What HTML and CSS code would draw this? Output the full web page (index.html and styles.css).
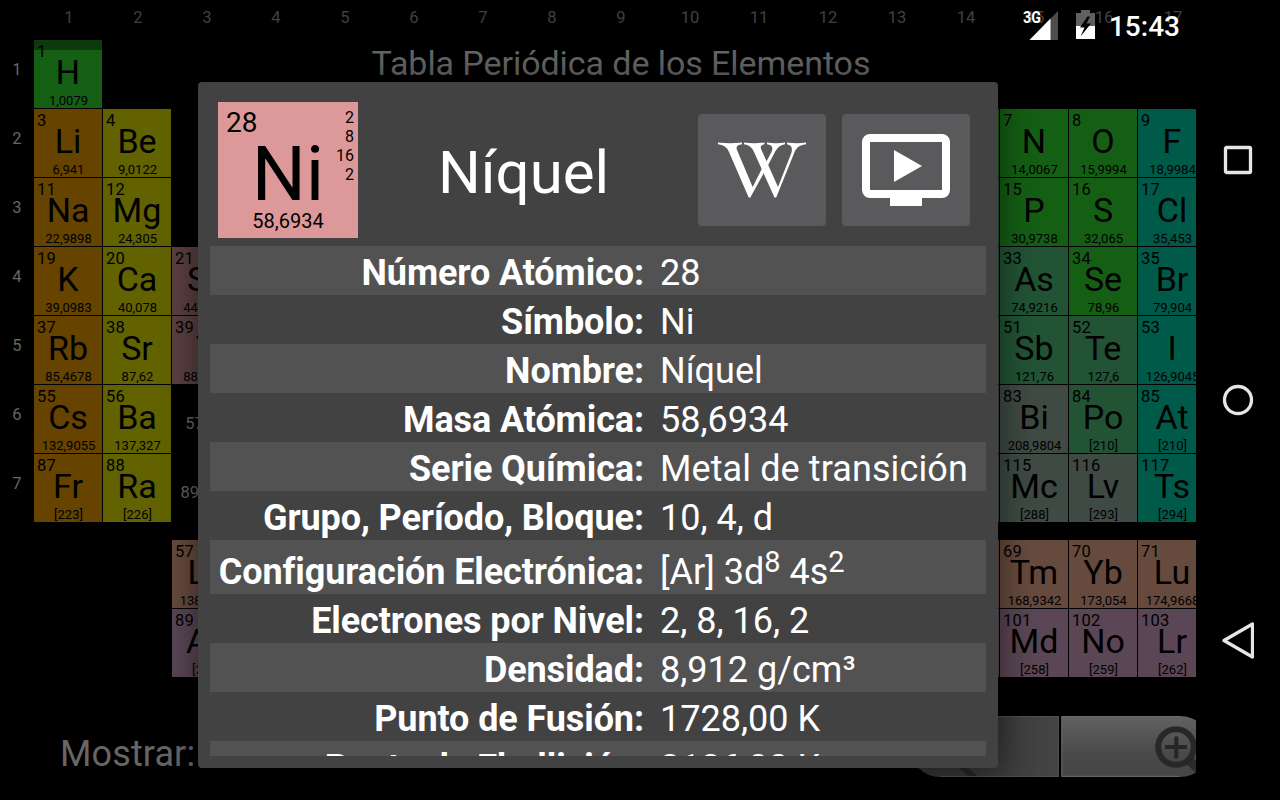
FILE: index.html
```html
<!DOCTYPE html>
<html lang="es">
<head>
<meta charset="utf-8">
<title>Tabla Periódica de los Elementos</title>
<link rel="stylesheet" href="styles.css">
</head>
<body>
<div class="screen">
  <main class="app">
    <div class="col-labels"><span>1</span><span>2</span><span>3</span><span>4</span><span>5</span><span>6</span><span>7</span><span>8</span><span>9</span><span>10</span><span>11</span><span>12</span><span>13</span><span>14</span><span>15</span><span>16</span><span>17</span></div>
    <div class="board">
      <div class="row-labels"><span>1</span><span>2</span><span>3</span><span>4</span><span>5</span><span>6</span><span>7</span></div>
      <div class="table">
        <h1 class="title">Tabla Periódica de los Elementos</h1>
        <div class="el nonmetal first c1 r1"><i>1</i><b>H</b><small>1,0079</small></div>
        <div class="el alkali c1 r2"><i>3</i><b>Li</b><small>6,941</small></div>
        <div class="el alkali c1 r3"><i>11</i><b>Na</b><small>22,9898</small></div>
        <div class="el alkali c1 r4"><i>19</i><b>K</b><small>39,0983</small></div>
        <div class="el alkali c1 r5"><i>37</i><b>Rb</b><small>85,4678</small></div>
        <div class="el alkali c1 r6"><i>55</i><b>Cs</b><small>132,9055</small></div>
        <div class="el alkali c1 r7"><i>87</i><b>Fr</b><small>[223]</small></div>
        <div class="el earth c2 r2"><i>4</i><b>Be</b><small>9,0122</small></div>
        <div class="el earth c2 r3"><i>12</i><b>Mg</b><small>24,305</small></div>
        <div class="el earth c2 r4"><i>20</i><b>Ca</b><small>40,078</small></div>
        <div class="el earth c2 r5"><i>38</i><b>Sr</b><small>87,62</small></div>
        <div class="el earth c2 r6"><i>56</i><b>Ba</b><small>137,327</small></div>
        <div class="el earth c2 r7"><i>88</i><b>Ra</b><small>[226]</small></div>
        <div class="el transition c3 r4"><i>21</i><b>Sc</b><small>44,9559</small></div>
        <div class="el transition c3 r5"><i>39</i><b>Y</b><small>88,9059</small></div>
        <div class="range c3 r6">57-71</div>
        <div class="range c3 r7">89-103</div>
        <div class="el lanth c3 r9"><i>57</i><b>La</b><small>138,9055</small></div>
        <div class="el actin c3 r10"><i>89</i><b>Ac</b><small>[227]</small></div>
        <div class="el nonmetal c14 r2"></div>
        <div class="el metalloid c14 r3"></div>
        <div class="el metalloid c14 r4"></div>
        <div class="el post c14 r5"></div>
        <div class="el post c14 r6"></div>
        <div class="el post c14 r7"></div>
        <div class="el lanth c14 r9"></div>
        <div class="el actin c14 r10"></div>
        <div class="el nonmetal c15 r2"><i>7</i><b>N</b><small>14,0067</small></div>
        <div class="el nonmetal c15 r3"><i>15</i><b>P</b><small>30,9738</small></div>
        <div class="el metalloid c15 r4"><i>33</i><b>As</b><small>74,9216</small></div>
        <div class="el metalloid c15 r5"><i>51</i><b>Sb</b><small>121,76</small></div>
        <div class="el post c15 r6"><i>83</i><b>Bi</b><small>208,9804</small></div>
        <div class="el post c15 r7"><i>115</i><b>Mc</b><small>[288]</small></div>
        <div class="el lanth c15 r9"><i>69</i><b>Tm</b><small>168,9342</small></div>
        <div class="el actin c15 r10"><i>101</i><b>Md</b><small>[258]</small></div>
        <div class="el nonmetal c16 r2"><i>8</i><b>O</b><small>15,9994</small></div>
        <div class="el nonmetal c16 r3"><i>16</i><b>S</b><small>32,065</small></div>
        <div class="el nonmetal c16 r4"><i>34</i><b>Se</b><small>78,96</small></div>
        <div class="el metalloid c16 r5"><i>52</i><b>Te</b><small>127,6</small></div>
        <div class="el metalloid c16 r6"><i>84</i><b>Po</b><small>[210]</small></div>
        <div class="el post c16 r7"><i>116</i><b>Lv</b><small>[293]</small></div>
        <div class="el lanth c16 r9"><i>70</i><b>Yb</b><small>173,054</small></div>
        <div class="el actin c16 r10"><i>102</i><b>No</b><small>[259]</small></div>
        <div class="el halogen c17 r2"><i>9</i><b>F</b><small>18,9984</small></div>
        <div class="el halogen c17 r3"><i>17</i><b>Cl</b><small>35,453</small></div>
        <div class="el halogen c17 r4"><i>35</i><b>Br</b><small>79,904</small></div>
        <div class="el halogen c17 r5"><i>53</i><b>I</b><small>126,9045</small></div>
        <div class="el halogen c17 r6"><i>85</i><b>At</b><small>[210]</small></div>
        <div class="el halogen c17 r7"><i>117</i><b>Ts</b><small>[294]</small></div>
        <div class="el lanth c17 r9"><i>71</i><b>Lu</b><small>174,9668</small></div>
        <div class="el actin c17 r10"><i>103</i><b>Lr</b><small>[262]</small></div>
      </div>
    </div>
    <div class="toolbar">
      <span class="show">Mostrar:</span>
      <svg class="zoomer" width="290" height="64" viewBox="910 714 290 64">
        <defs>
          <linearGradient id="up" x1="0" y1="0" x2="0" y2="1"><stop offset="0" stop-color="#626262"/><stop offset=".6" stop-color="#4a4a4a"/><stop offset="1" stop-color="#454545"/></linearGradient>
          <linearGradient id="down" x1="0" y1="0" x2="1" y2="0"><stop offset="0" stop-color="#343434"/><stop offset=".55" stop-color="#3a3a3a"/><stop offset=".85" stop-color="#424242"/><stop offset="1" stop-color="#444"/></linearGradient>
        </defs>
        <path d="M1059 716H940a30.500 30.500 0 0 0 0 61H1059z" fill="url(#down)"/>
        <path d="M940 776.500H1058.500V716.500H998" fill="none" stroke="#505050"/>
        <path d="M956 765l12 11h9l-12-11z" fill="#262626"/>
        <path d="M1061.500 716H1180a30.500 30.500 0 0 1 0 61H1061.500z" fill="url(#up)"/>
        <path d="M1180 776.300H1061.800V716.500H1180" fill="none" stroke="#6c6c6c"/>
        <path d="M1188 759l12 12" stroke="#2b2b2b" stroke-width="9"/>
        <circle cx="1176" cy="747" r="17.800" fill="none" stroke="#282828" stroke-width="6"/>
        <path d="M1165 747h22M1176.300 736.500v22" stroke="#262626" stroke-width="4"/>
      </svg>
    </div>
  </main>
  <nav class="nav">
    <svg width="32" height="32" viewBox="0 0 32 32"><rect x="3.500" y="3.500" width="25" height="25" rx="1"/></svg>
    <svg width="32" height="32" viewBox="0 0 32 32"><circle cx="16" cy="16" r="13.500"/></svg>
    <svg width="32" height="40" viewBox="0 0 32 40"><path d="M2 20.500L30.500 4V37z"/></svg>
  </nav>

  <div class="status">
    <svg width="36" height="32" viewBox="1024 9 36 32">
      <path d="M1059 11v29h-28.500z" fill="#4d4d4d"/><path d="M1051.500 18.600V40h-21z" fill="#fff"/>
      <text x="1024" y="23.300" class="net" textLength="18" lengthAdjust="spacingAndGlyphs">3G</text>
    </svg>
    <svg class="batt" width="20" height="32" viewBox="1075 9 20 32">
      <path d="M1076 13h5v-3h9v3h5v13.500h-19z" fill="#606060"/><path d="M1076 26h19v13h-19z" fill="#fff"/>
      <path d="M1087.500 16.500l-7.500 11h4.500l-4 9 10.500-13h-4.500l3.500-7z" fill="#000"/>
    </svg>
    <span class="clock">15:43</span>
  </div>

  <section class="dialog">
    <header class="head">
      <div class="card">
        <span class="num">28</span><span class="shells">2<br>8<br>16<br>2</span>
        <span class="sym">Ni</span><span class="mass">58,6934</span>
      </div>
      <h2 class="name">Níquel</h2>
      <div class="btn" role="button" aria-label="Wikipedia">
        <svg width="96" height="96" viewBox="714 122 96 96">
          <g fill="#fff">
            <path d="M718 142.500Q730 144 742 142.500V144.300Q735 145 737 150L752.700 187 763 166.500 765.500 170 750.300 197.500H748.700L729 152Q726 144.800 718 144.300z"/>
            <path d="M744 142.500Q754 144 764.500 142.500V144.300Q759 145 761.500 150L778 187 791 154Q794 145.500 787 144.300V142.500Q797 144 806 142.500V144.300Q798 145 795 151L776.200 197.500H774.500L754 152Q751 145 744 144.300z"/>
            <path d="M764 166L771.500 152Q774.500 145 767 144.300V142.500Q776 144 785 142.500V144.300Q779 145 775.500 151L765.500 170z"/>
          </g>
        </svg>
      </div>
      <div class="btn" role="button" aria-label="Vídeo">
        <svg width="96" height="96" viewBox="0 0 96 96"><rect x="12" y="20" width="80" height="56" rx="4" fill="none" stroke="#fff" stroke-width="8" transform="translate(-4 -4)"/><path d="M32 76h32v8H32zM36 28v32l28-16z" fill="#fff"/></svg>
      </div>
    </header>
    <dl class="props">
      <div><dt>Número Atómico:</dt><dd>28</dd></div>
      <div><dt>Símbolo:</dt><dd>Ni</dd></div>
      <div><dt>Nombre:</dt><dd>Níquel</dd></div>
      <div><dt>Masa Atómica:</dt><dd>58,6934</dd></div>
      <div><dt>Serie Química:</dt><dd class="wide">Metal de transición</dd></div>
      <div><dt>Grupo, Período, Bloque:</dt><dd>10, 4, d</dd></div>
      <div class="tall"><dt>Configuración Electrónica:</dt><dd>[Ar] 3d<sup>8</sup> 4s<sup>2</sup></dd></div>
      <div><dt>Electrones por Nivel:</dt><dd>2, 8, 16, 2</dd></div>
      <div><dt>Densidad:</dt><dd>8,912 g/cm³</dd></div>
      <div><dt>Punto de Fusión:</dt><dd>1728,00 K</dd></div>
      <div><dt>Punto de Ebullición:</dt><dd>3186,00 K</dd></div>
    </dl>
  </section>
</div>
</body>
</html>
```
FILE: styles.css
```css
* { box-sizing: border-box; }
body { margin: 0; background: #000; font-family: Roboto, "Liberation Sans", sans-serif; }
.screen { position: relative; width: 1280px; height: 800px; overflow: hidden; background: #000; display: flex; }

.app { width: 1196px; height: 800px; overflow: hidden; }
.col-labels { display: flex; gap: 1px; height: 40px; padding-left: 35px; }
.col-labels span { flex: 0 0 68px; text-align: center; font-size: 16.500px; line-height: 35px; color: #404040; }
.board { display: flex; height: 640px; }
.row-labels { width: 34px; flex: none; display: flex; flex-direction: column; gap: 1px; }
.row-labels span { height: 68px; line-height: 60px; text-align: center; font-size: 16.500px; color: #666; }
.table { flex: none; display: grid; grid-template-columns: repeat(17, 68px); grid-template-rows: repeat(7, 68px) 16px repeat(2, 68px); gap: 1px; }
.title { grid-column: 3 / 16; grid-row: 1; margin: 0; text-align: center; font-weight: 400; font-size: 34px; line-height: 47px; letter-spacing: -.07px; padding-left: 2px; color: #666; }

.el { width: 68px; height: 68px; color: #000; display: flex; flex-direction: column; align-items: center; }
.el i { align-self: flex-start; margin-left: 3px; font-style: normal; font-size: 16.500px; letter-spacing: .2px; line-height: 24px; height: 19px; }
.el b { font-weight: 400; font-size: 34px; line-height: 32px; height: 32px; margin-top: -3px; white-space: nowrap; }
.el small { font-size: 13px; line-height: 15px; margin: 5px 0 0 1px; white-space: nowrap; }
.nonmetal { background: #145f14; }
.first { background: linear-gradient(#0c3a0c 10px, #145f14 10px); }
.alkali { background: #664400; }
.earth { background: #626200; }
.transition { background: #5c4040; }
.metalloid { background: #225335; }
.post { background: #3e4a43; }
.halogen { background: #005a4a; }
.lanth { background: #664a3e; }
.actin { background: #5a4655; }
.range { color: #666; font-size: 16.500px; line-height: 77px; text-align: center; }
.c1 { grid-column: 1; } .c2 { grid-column: 2; } .c3 { grid-column: 3; } .c14 { grid-column: 14; }
.c15 { grid-column: 15; } .c16 { grid-column: 16; } .c17 { grid-column: 17; }
.r1 { grid-row: 1; } .r2 { grid-row: 2; } .r3 { grid-row: 3; } .r4 { grid-row: 4; } .r5 { grid-row: 5; }
.r6 { grid-row: 6; } .r7 { grid-row: 7; } .r9 { grid-row: 9; } .r10 { grid-row: 10; }

.toolbar { display: flex; padding: 34px 0 0 60px; height: 120px; justify-content: space-between; width: 1200px; }
.show { font-size: 36px; line-height: 80px; letter-spacing: .12px; color: #666; }
.zoomer { display: block; flex: none; }

.nav { width: 84px; display: flex; flex-direction: column; align-items: center; padding-top: 144px; }
.nav svg { fill: none; stroke: #e6e6e6; stroke-width: 3.300; stroke-linejoin: round; }
.nav svg + svg { margin-top: 208px; }
.nav svg:last-child { margin-top: 204px; }

.status { position: absolute; top: 0; right: 100px; height: 50px; display: flex; align-items: flex-start; padding-top: 9px; color: #fff; }
.batt { margin: 0 14px 0 16px; }
.net { font-size: 16px; font-weight: 700; fill: #fff; }
.clock { font-size: 28px; line-height: 36px; font-weight: 500; }

.dialog { position: absolute; left: 198px; top: 82px; width: 800px; height: 686px; background: #424242; border-radius: 4px; padding: 20px 12px 12px; box-shadow: 0 0 32px 4px rgba(0,0,0,.45); color: #fff; }
.head { display: flex; height: 144px; padding: 0 16px 0 8px; }
.card { flex: none; width: 140px; height: 136px; background: #d99; color: #000; display: grid; grid-template: 38px 68px 30px / 100px 40px; }
.num { font-size: 28px; line-height: 42px; padding-left: 8px; }
.shells { grid-column: 2; grid-row: 1 / 3; text-align: right; font-size: 16px; line-height: 19px; padding: 6px 4px 0 0; }
.sym { grid-column: 1 / 3; grid-row: 2; text-align: center; font-size: 76px; line-height: 68px; }
.mass { grid-column: 1 / 3; text-align: center; font-size: 20px; line-height: 27px; }
.name { flex: 1; margin: 0; text-align: center; font-weight: 400; font-size: 60px; line-height: 141px; padding-left: 1px; }
.btn { flex: none; width: 128px; height: 112px; margin: 12px 0 0 16px; background: #5a5a5c; border-radius: 4px; display: flex; align-items: center; justify-content: center; }
.name + .btn { margin-left: 10px; }

.props { margin: 0; height: 510px; overflow: hidden; font-size: 36px; line-height: 49px; }
.props > div { display: grid; grid-template-columns: 434px 1fr; column-gap: 16px; height: 49px; padding-top: 3px; white-space: nowrap; }
.props > div:nth-child(odd) { background: #525252; }
.props .tall { height: 54px; padding-top: 8px; }
.props dt { text-align: right; font-weight: 700; letter-spacing: -.1px; }
.props dd { margin: 0; }
.props .wide { letter-spacing: .1px; }
.props sup { font-size: 29px; line-height: 0; vertical-align: 12px; }
```
